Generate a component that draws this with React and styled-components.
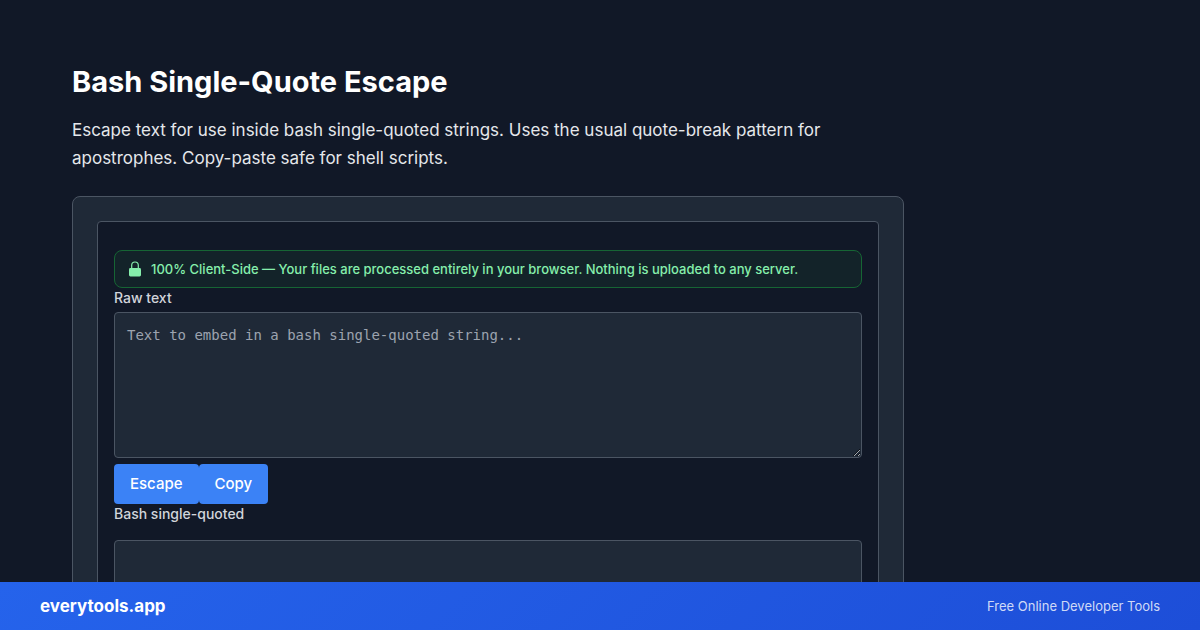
import React from 'react';
import styled, { createGlobalStyle } from 'styled-components';

const GlobalStyle = createGlobalStyle`
  *, *::before, *::after { box-sizing: border-box; }
  body {
    margin: 0;
    background: #111827;
    color: #e5e7eb;
    font-family: Inter, "Liberation Sans", sans-serif;
    font-size: 16px;
    line-height: 24px;
  }
`;

const Page = styled.div`
  height: 100vh;
  display: flex;
  flex-direction: column;
`;

const Main = styled.main`
  flex: 1;
  min-height: 0;
  overflow: hidden;
  padding: 64px 72px 0;
`;

const Content = styled.div`
  max-width: 832px;
`;

const Title = styled.h1`
  margin: 0 0 16px;
  color: #fff;
  font-size: 29px;
  line-height: 36px;
  font-weight: 700;
`;

const Lead = styled.p`
  margin: 0 0 24px;
  max-width: 800px;
  font-size: 17px;
  line-height: 28px;
`;

const Card = styled.section`
  padding: 24px;
  background: #1f2937;
  border: 1px solid #4b5563;
  border-radius: 8px;
`;

const Panel = styled.form`
  display: flex;
  flex-direction: column;
  padding: 28px 16px;
  background: #111827;
  border: 1px solid #4b5563;
  border-radius: 4px;
`;

const Notice = styled.div`
  display: flex;
  align-items: center;
  gap: 8px;
  padding: 8px 12px;
  background: #132329;
  border: 1px solid #166534;
  border-radius: 8px;
  color: #86efac;
  font-size: 13px;
  line-height: 20px;
  font-weight: 500;
`;

const Label = styled.label`
  color: #d1d5db;
  font-size: 14px;
  line-height: 20px;
  font-weight: 500;
`;

const TextArea = styled.textarea`
  display: block;
  width: 100%;
  height: 146px;
  margin: ${(p) => (p.$spaced ? 16 : 4)}px 0 6px;
  padding: 12px;
  background: #1f2937;
  border: 1px solid #4b5563;
  border-radius: 4px;
  color: #f3f4f6;
  font-family: "DejaVu Sans Mono", "Liberation Mono", monospace;
  font-size: 14px;
  line-height: 20px;
  &::placeholder { color: #9ca3af; }
`;

const Actions = styled.div`
  display: flex;
`;

const Button = styled.button`
  padding: 8px 16px;
  background: #3b82f6;
  border: 0;
  border-radius: 4px;
  color: #fff;
  font-family: inherit;
  font-size: 15px;
  line-height: 24px;
  font-weight: 500;
`;

const Footer = styled.footer`
  display: flex;
  align-items: center;
  justify-content: space-between;
  height: 48px;
  padding: 0 40px;
  background: linear-gradient(135deg, #2563eb, #1d4ed8);
`;

const Brand = styled.a`
  color: #fff;
  font-size: 17px;
  font-weight: 700;
  text-decoration: none;
`;

const Tagline = styled.span`
  color: rgba(255, 255, 255, 0.8);
  font-size: 13px;
`;

const LockIcon = () => (
  <svg width="16" height="20" viewBox="0 0 16 20" fill="none" aria-hidden="true">
    <path d="M4.7 10V6.3C4.7 4.2 6 3 8 3s3.3 1.2 3.3 3.3V10" stroke="#86efac" strokeWidth="1.2" />
    <rect x="2" y="9" width="12" height="8.4" rx="1.4" fill="#86efac" />
  </svg>
);

export default function App() {
  return (
    <Page>
      <GlobalStyle />
      <Main>
        <Content>
          <Title>Bash Single-Quote Escape</Title>
          <Lead>
            Escape text for use inside bash single-quoted strings. Uses the usual quote-break
            pattern for apostrophes. Copy-paste safe for shell scripts.
          </Lead>
          <Card>
            <Panel>
              <Notice>
                <LockIcon />
                <span>
                  100% Client-Side — Your files are processed entirely in your browser. Nothing is
                  uploaded to any server.
                </span>
              </Notice>
              <Label htmlFor="raw">Raw text</Label>
              <TextArea id="raw" placeholder="Text to embed in a bash single-quoted string..." />
              <Actions>
                <Button type="button">Escape</Button>
                <Button type="button">Copy</Button>
              </Actions>
              <Label htmlFor="quoted">Bash single-quoted</Label>
              <TextArea id="quoted" $spaced readOnly />
            </Panel>
          </Card>
        </Content>
      </Main>
      <Footer>
        <Brand href="#">everytools.app</Brand>
        <Tagline>Free Online Developer Tools</Tagline>
      </Footer>
    </Page>
  );
}
